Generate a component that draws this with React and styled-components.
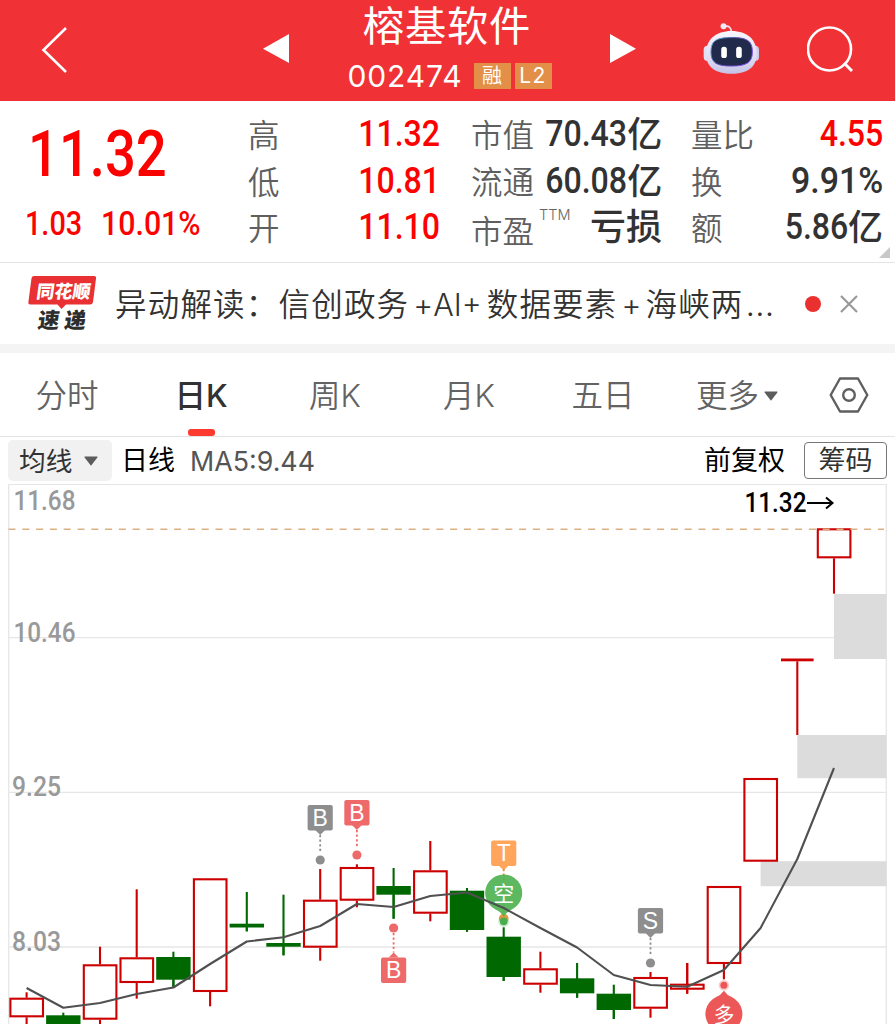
import React from "react";
import styled, { createGlobalStyle } from "styled-components";

const CJK = '"Noto Sans CJK SC", sans-serif';
const UP = "#fb0200";
const RED = "#cc0000";
const GREEN = "#006800";

const GlobalStyle = createGlobalStyle`
  * { box-sizing: border-box; }
  html, body { margin: 0; background: #fff; }
  body { width: 895px; height: 1024px; overflow: hidden; font-family: Inter, ${CJK}; color: #323232; }
  svg { display: block; flex: none; }
`;

const Page = styled.main`
  width: 895px;
  height: 1024px;
  overflow: hidden;
  display: flex;
  flex-direction: column;
`;

/* ---------- header ---------- */
const Header = styled.header`
  height: 101px;
  flex: none;
  background: #f03136;
  color: #fff;
  display: flex;
  align-items: flex-start;
  padding-left: 41px;
`;
const HeaderIcon = styled.div`
  margin: ${(p) => p.$top}px 0 0 ${(p) => p.$gap || 0}px;
`;
const TitleBlock = styled.div`
  width: 321px;
  display: flex;
  flex-direction: column;
  align-items: center;
`;
const StockName = styled.h1`
  margin: 0;
  font: 400 41.3px/47px ${CJK};
  letter-spacing: 0.8px;
  padding-right: 5px;
  white-space: nowrap;
`;
const CodeRow = styled.div`
  height: 58px;
  display: flex;
  align-items: center;
  gap: 4px;
`;
const Code = styled.span`
  font: 400 30px/52px Inter, sans-serif;
  letter-spacing: 0.9px;
  margin-right: 7px;
`;
const Tag = styled.span`
  width: 37px;
  height: 26px;
  background: #e38f48;
  font: 400 ${(p) => p.$size || 20}px/26px Inter, ${CJK};
  text-align: center;
  letter-spacing: ${(p) => p.$track || 0}px;
`;

/* ---------- quote ---------- */
const Quote = styled.section`
  height: 162px;
  flex: none;
  border-bottom: 1px solid #e4e4e4;
  display: flex;
  padding-top: 10px;
  position: relative;
`;
const PriceBlock = styled.div`
  width: 248px;
  color: ${UP};
`;
const Digits = styled.span`
  display: inline-block;
  font-family: Roboto, sans-serif;
  font-weight: 500;
  transform: scaleX(${(p) => p.$squeeze || 0.88});
  transform-origin: ${(p) => p.$origin || "right"} center;
  white-space: nowrap;
`;
const Price = styled.div`
  font-size: 64px;
  line-height: 84px;
  height: 84px;
  padding-left: 28px;
`;
const Change = styled.div`
  display: flex;
  font-size: 33.5px;
  line-height: 57px;
  padding-left: 25px;
`;
const ChangeCell = styled.div`
  width: ${(p) => p.$w}px;
`;
const StatColumn = styled.div`
  width: ${(p) => p.$w}px;
  margin-right: ${(p) => p.$gap}px;
`;
const Stat = styled.div`
  height: 46.5px;
  display: flex;
  justify-content: space-between;
`;
const StatLabel = styled.span`
  font: 350 31.5px/45px ${CJK};
  color: #5f5f5f;
  padding-top: ${(p) => p.$drop || 0}px;
  white-space: nowrap;
`;
const Sup = styled.sup`
  font: 300 14.5px/20px Inter, sans-serif;
  letter-spacing: 0;
  color: #666;
  margin: 1px auto 0 5px;
`;
const StatValue = styled.span`
  font: 500 36.5px/46.5px Roboto, ${CJK};
  color: ${(p) => (p.$up ? UP : "#323232")};
  display: flex;
`;
const Unit = styled.span`
  font: 500 ${(p) => p.$size || 35}px/41px ${CJK};
`;
const Corner = styled.svg`
  position: absolute;
  right: 5px;
  bottom: 4px;
`;

/* ---------- news ---------- */
const News = styled.section`
  height: 90px;
  flex: none;
  border-bottom: 9px solid #f4f4f4;
  display: flex;
  align-items: center;
  padding-left: 28px;
`;
const Headline = styled.div`
  width: 690px;
  margin-left: 18px;
  font: 350 31.5px/80px Inter, ${CJK};
  letter-spacing: 1.2px;
  white-space: nowrap;
  color: #323232;
  padding-top: 2px;
`;
const Joiner = styled.span`
  font-size: 30.5px;
  letter-spacing: 0;
  margin: 0 ${(p) => p.$after}px 0 ${(p) => p.$before}px;
`;
const Ellipsis = styled.span`
  margin-left: 2px;
  letter-spacing: 0;
  font-size: 34px;
`;
const Dot = styled.i`
  width: 16px;
  height: 16px;
  border-radius: 50%;
  background: #eb3030;
  margin-right: 19px;
`;

/* ---------- tabs ---------- */
const Tabs = styled.nav`
  height: 84px;
  flex: none;
  border-bottom: 1px solid #e4e4e4;
  display: flex;
`;
const Tab = styled.div`
  width: 134px;
  display: flex;
  flex-direction: column;
  align-items: center;
  font: ${(p) => (p.$active ? 500 : 350)} 31.5px/68px Inter, ${CJK};
  color: ${(p) => (p.$active ? "#323232" : "#636363")};
`;
const TabText = styled.span`
  height: 76px;
  padding-top: 10px;
  display: flex;
  align-items: center;
  gap: 5px;
`;
const Underline = styled.i`
  width: 27px;
  height: 7px;
  border-radius: 3px;
  background: #fd3a30;
`;
const SettingsCell = styled.div`
  width: 90px;
  display: flex;
  justify-content: center;
  align-items: center;
`;

/* ---------- chart tools ---------- */
const Tools = styled.div`
  height: 47px;
  flex: none;
  display: flex;
  align-items: center;
  padding: 0 8px;
  font: 400 27px/40px Inter, ${CJK};
  color: #000;
`;
const ToolText = styled.span`
  padding-top: 1px;
  margin-left: ${(p) => p.$left || "0"};
`;
const Picker = styled.div`
  width: 104px;
  height: 41px;
  border-radius: 5px;
  background: #f1f1f1;
  color: #323232;
  display: flex;
  align-items: center;
  padding-left: 11px;
  gap: 12px;
  margin-right: 9px;
  font-size: 26.7px;
`;
const MaValue = styled.span`
  margin-left: 15px;
  font-size: 26.8px;
  color: #555;
`;
const Chips = styled.div`
  width: 83px;
  height: 37px;
  line-height: 35px;
  border: 1.5px solid #777;
  border-radius: 4px;
  margin-left: 19px;
  text-align: center;
  color: #323232;
`;

/* ---------- data ---------- */
const columns = [
  { w: 192, gap: 31, rows: [["高", "11.32", "", true], ["低", "10.81", "", true], ["开", "11.10", "", true]] },
  { w: 191, gap: 29, rows: [["市值", "70.43", "亿"], ["流通", "60.08", "亿"], ["市盈", "", "亏损"]] },
  { w: 192, gap: 0, rows: [["量比", "4.55", "", true], ["换", "9.91%", ""], ["额", "5.86", "亿"]] },
];

// [direction, body top, body bottom, high, low] in chart pixels
const candles = [
  [1, 997.7, 1017.3, 992.3, 1030],
  [0, 1015.3, 1032, 1012.7, 1032],
  [1, 964.3, 1019.7, 946.7, 1030],
  [1, 957.3, 983, 889.3, 998.7],
  [0, 957, 979.7, 951.7, 987.3],
  [1, 878.3, 992, 878.3, 1006.3],
  [0, 923.7, 927.5, 892, 931.3],
  [0, 943, 946.7, 894.7, 955.3],
  [1, 899.7, 947.7, 869, 960.7],
  [1, 867, 900.7, 864.3, 907.3],
  [0, 886, 894.7, 868, 918.7],
  [1, 870.3, 913.7, 841, 921.3],
  [0, 890.7, 930, 888, 931.7],
  [0, 936.7, 977, 927.3, 981],
  [1, 968.3, 984.7, 951.7, 992.7],
  [0, 978.3, 993.3, 963, 997.7],
  [0, 993.7, 1010, 984.7, 1019],
  [1, 977, 1008.7, 972, 1017.7],
  [1, 983.7, 989.7, 963, 993.7],
  [1, 886, 964, 886, 979.3],
  [1, 778, 861.7, 778, 861.7],
  [1, 658.5, 661.3, 658.5, 735],
  [1, 528.3, 558.3, 528.3, 593.7],
];
const ma5 = [988, 1007.7, 1003, 994, 987.5, 964, 941.5, 937.3, 926, 904, 907, 896, 892.5, 908, 928, 947.5, 975, 985, 986.7, 970, 928, 859, 768];
const cx = (i) => 26.6 + 36.7 * i;

function Candle({ i, data: [up, top, bottom, high, low] }) {
  const x = cx(i);
  const color = up ? RED : GREEN;
  const thin = bottom - top < 4;
  return (
    <g stroke={color} strokeWidth="2.1">
      {high < top && <path d={`M${x} ${high}V${up ? top : low}`} />}
      {low > bottom && <path d={`M${x} ${bottom}V${low}`} />}
      {up && !thin ? (
        <rect x={x - 16.2} y={top + 1} width="32.6" height={bottom - top - 2} fill="none" />
      ) : (
        <rect x={x - (up ? 16.3 : 17.2)} y={top} width={up ? 32.6 : 34.4} height={bottom - top} fill={color} stroke="none" />
      )}
      {i === 18 && <path d={`M${x} ${high}V${low}`} />}
    </g>
  );
}

function Flag({ i, y, letter, color, dot, below }) {
  const x = cx(i);
  const tip = below ? `M${x - 5} ${y}l5 -5l5 5z` : `M${x - 5} ${y + 25}l5 5l5 -5z`;
  return (
    <g fill={color}>
      <rect x={x - 12.6} y={y} width="25.2" height="25.4" rx="2" />
      <path d={tip} />
      <text x={x} y={y + 20.7} fill="#fff" fontFamily='"Liberation Sans", sans-serif' fontSize="23" textAnchor="middle">{letter}</text>
      {dot && (
        <>
          <path d={below ? `M${x} ${dot + 5}V${y - 5}` : `M${x} ${y + 30}V${dot - 8}`} stroke={color} strokeWidth="1.8" strokeDasharray="2.2 2.4" />
          <circle cx={x} cy={dot} r="4.6" />
        </>
      )}
    </g>
  );
}

function Chart() {
  return (
    <svg width="895" height="540" viewBox="0 484 895 540">
      <g stroke="#e6e6e6" strokeWidth="1.3" fill="none">
        <path d="M8.7 1024V484.3H886.3V1024M9 637.7H886M9 792.4H886M9 947H886" />
      </g>
      <g fill="#dcdcdc">
        <rect x="834" y="594" width="52.5" height="65" />
        <rect x="797.3" y="735" width="89.2" height="43.2" />
        <rect x="760.6" y="861.2" width="125.9" height="25" />
      </g>
      {candles.map((c, i) => <Candle key={i} i={i} data={c} />)}
      <path d="M8.5 529.2H884" stroke="#dbb184" strokeWidth="1.4" strokeDasharray="7 6.8" />
      <g fontFamily="Roboto, sans-serif" fontWeight="500" fontSize="27" fill="#999">
        <text x="13.5" y="510.3" textLength="62" lengthAdjust="spacingAndGlyphs">11.68</text>
        <text x="13.5" y="641.7" textLength="62" lengthAdjust="spacingAndGlyphs">10.46</text>
        <text x="12" y="796.3" textLength="49" lengthAdjust="spacingAndGlyphs">9.25</text>
        <text x="12" y="951" textLength="49" lengthAdjust="spacingAndGlyphs">8.03</text>
        <text x="744.5" y="512.3" fill="#000" textLength="62" lengthAdjust="spacingAndGlyphs">11.32</text>
      </g>
      <path d="M807 503H832M826 497.5L832.5 503L826 508.5" fill="none" stroke="#000" strokeWidth="2" />
      <Flag i={8} y={805} letter="B" color="#8e8e8e" dot={860} />
      <Flag i={9} y={800} letter="B" color="#ee6a6a" dot={855} />
      <Flag i={10} y={957.6} letter="B" color="#ee6a6a" dot={928} below />
      <Flag i={13} y={840.6} letter="T" color="#ffa55c" />
      <Flag i={17} y={908} letter="S" color="#8e8e8e" dot={963} />
      <path d={`M${cx(13)} 869V916`} stroke="#e79035" strokeWidth="1.8" strokeDasharray="2.2 2.4" />
      <circle cx={cx(13)} cy="918.5" r="4.8" fill="#ec983f" />
      <circle cx={cx(13)} cy="921.5" r="5.5" fill="#4cb050" opacity="0.25" />
      <circle cx={cx(13)} cy="921.5" r="3.8" fill="#48ad4c" />
      <path d="M495.5 909.5A18.5 18.5 0 1 1 511.9 909.5Q507 911.5 503.7 916.5Q500.500 911.5 495.500 909.5Z" fill="#4bb04f" opacity="0.9" />
      <path d={"M" + ma5.map((y, i) => `${cx(i)} ${y}`).join("L")} fill="none" stroke="#505050" strokeWidth="2.1" strokeLinejoin="round" />
      <circle cx={cx(19)} cy="985.3" r="5.2" fill="#ee5a5a" opacity="0.3" />
      <circle cx={cx(19)} cy="985.3" r="3.5" fill="#ee5555" />
      <path d="M715.7 997.3Q720.5 995.5 723.9 990.7Q727.300 995.5 732.1 997.3A18.5 18.5 0 1 1 715.7 997.3Z" fill="#ec5757" />
      <g fill="#fff" fontFamily={CJK} fontSize="21" textAnchor="middle">
        <text x={cx(13)} y="901">空</text>
        <text x={cx(19)} y="1021.500">多</text>
      </g>
    </svg>
  );
}

function Robot() {
  return (
    <svg width="57" height="53" viewBox="40 36 172 158">
      <defs>
        <linearGradient id="shell" x1="0" y1="0" x2="0" y2="1">
          <stop offset="0" stopColor="#f8f6ff" />
          <stop offset="0.65" stopColor="#dedcf1" />
          <stop offset="1" stopColor="#c4c1e6" />
        </linearGradient>
        <linearGradient id="rim" x1="0" y1="0" x2="1" y2="0.5">
          <stop offset="0" stopColor="#62c5df" />
          <stop offset="0.5" stopColor="#514ba6" />
          <stop offset="1" stopColor="#8350ed" />
        </linearGradient>
      </defs>
      <path d="M105 48Q124 44 126 66" fill="none" stroke="#ece4f3" strokeWidth="5" />
      <circle cx="102" cy="48" r="9" fill="#f0e8f5" />
      <rect x="42" y="107" width="26" height="46" rx="12" fill="#e2dff5" />
      <rect x="183" y="107" width="26" height="46" rx="12" fill="#d0cced" />
      <path d="M126 62C174 62 202 88 202 130C202 172 174 191 126 191C78 191 49 172 49 130C49 88 78 62 126 62Z" fill="url(#shell)" />
      <path d="M126 82C172 82 189 91 189 126C189 158 170 168 126 168C82 168 64 158 64 126C64 91 80 82 126 82Z" fill="#222a4c" stroke="url(#rim)" strokeWidth="3" />
      <rect x="95" y="110" width="17" height="34" rx="8" fill="#fff" />
      <rect x="140" y="110" width="17" height="34" rx="8" fill="#fff" />
    </svg>
  );
}

function Logo() {
  return (
    <svg width="69" height="58" viewBox="28 274 69 58">
      <path d="M34 275H94Q96.500 275 96 277.500L93 301Q92.600 303.500 90 303.500H66L61.500 308L57.500 303.500H30.500Q28 303.500 28.400 301L31.500 277.300Q32 275 34 275Z" fill="#e93033" />
      <g fontFamily={CJK} fontWeight="900" transform="translate(61.500 0) skewX(-8)">
        <text x="16" y="296.800" fill="#fff" fontSize="18" textLength="54" lengthAdjust="spacingAndGlyphs">同花顺</text>
        <text x="21.500" y="327" fill="#2d2d2d" fontSize="21.500" textLength="48">速递</text>
      </g>
    </svg>
  );
}

const Caret = ({ w = 14, h = 10 }) => (
  <svg width={w} height={h} viewBox="0 0 14 10"><path d="M1 .5H13Q14 .5 13.400 1.500L7.600 9Q7 10 6.400 9L.6 1.500Q0 .5 1 .5Z" fill="#5c5c5c" /></svg>
);

export default function App() {
  return (
    <Page>
      <GlobalStyle />
      <Header>
        <HeaderIcon $top={26}>
          <svg width="26" height="48" viewBox="0 0 26 48"><path d="M25 2L2.500 24L25 46" fill="none" stroke="#fff" strokeWidth="2.600" /></svg>
        </HeaderIcon>
        <HeaderIcon $top={34} $gap={196}>
          <svg width="26" height="29" viewBox="0 0 26 29"><path d="M26 0V29L0 14.800Z" fill="#fff" /></svg>
        </HeaderIcon>
        <TitleBlock>
          <StockName>榕基软件</StockName>
          <CodeRow>
            <Code>002474</Code>
            <Tag>融</Tag>
            <Tag $size={21} $track={1.5}>L2</Tag>
          </CodeRow>
        </TitleBlock>
        <HeaderIcon $top={34}>
          <svg width="26" height="29" viewBox="0 0 26 29"><path d="M0 0V29L26 14.800Z" fill="#fff" /></svg>
        </HeaderIcon>
        <HeaderIcon $top={22} $gap={67}><Robot /></HeaderIcon>
        <HeaderIcon $top={26} $gap={47}>
          <svg width="47" height="47" viewBox="0 0 47 47" fill="none" stroke="#fff" strokeWidth="2.600">
            <circle cx="22.500" cy="23" r="21.500" /><path d="M37 37L45 45" strokeWidth="3" />
          </svg>
        </HeaderIcon>
      </Header>

      <Quote>
        <PriceBlock>
          <Price><Digits $origin="left" $squeeze={0.85}>11.32</Digits></Price>
          <Change>
            <ChangeCell $w={76}><Digits $origin="left" $squeeze={0.86}>1.03</Digits></ChangeCell>
            <ChangeCell $w={110}><Digits $origin="left" $squeeze={0.905}>10.01%</Digits></ChangeCell>
          </Change>
        </PriceBlock>
        {columns.map((col, i) => (
          <StatColumn key={i} $w={col.w} $gap={col.gap}>
            {col.rows.map(([label, num, unit, up]) => (
              <Stat key={label}>
                <StatLabel $drop={label === "市盈" ? 3 : 0}>{label}</StatLabel>
                {label === "市盈" && <Sup>TTM</Sup>}
                <StatValue $up={up}>
                  {num && <Digits $squeeze={num.endsWith("%") ? 0.93 : 0.88}>{num}</Digits>}
                  {unit && <Unit $size={unit.length > 1 ? 36 : 35}>{unit}</Unit>}
                </StatValue>
              </Stat>
            ))}
          </StatColumn>
        ))}
        <Corner width="11" height="11"><path d="M11 0V11H0Z" fill="#c8c8c8" /></Corner>
      </Quote>

      <News>
        <Logo />
        <Headline>
          异动解读：信创政务<Joiner $before={4} $after={5}>+AI+</Joiner>
          数据要素<Joiner $before={4} $after={4}>+</Joiner>海峡两<Ellipsis>…</Ellipsis>
        </Headline>
        <Dot />
        <svg width="18" height="18" viewBox="0 0 18 18"><path d="M1 1L17 17M17 1L1 17" stroke="#999" strokeWidth="2.200" /></svg>
      </News>

      <Tabs>
        {["分时", "日K", "周K", "月K", "五日", "更多"].map((t, i) => (
          <Tab key={t} $active={i === 1}>
            <TabText>{t}{i === 5 && <Caret />}</TabText>
            {i === 1 && <Underline />}
          </Tab>
        ))}
        <SettingsCell>
          <svg width="40" height="36" viewBox="0 0 40 36" fill="none" stroke="#5f5f5f" strokeWidth="2.400" strokeLinejoin="round">
            <path d="M11 1.500H29L38.300 18L29 34.500H11L1.700 18Z" /><circle cx="20" cy="18" r="5.800" />
          </svg>
        </SettingsCell>
      </Tabs>

      <Tools>
        <Picker><ToolText>均线</ToolText><Caret /></Picker>
        <ToolText>日线</ToolText>
        <MaValue>MA5:9.44</MaValue>
        <ToolText $left="auto">前复权</ToolText>
        <Chips>筹码</Chips>
      </Tools>
      <Chart />
    </Page>
  );
}
